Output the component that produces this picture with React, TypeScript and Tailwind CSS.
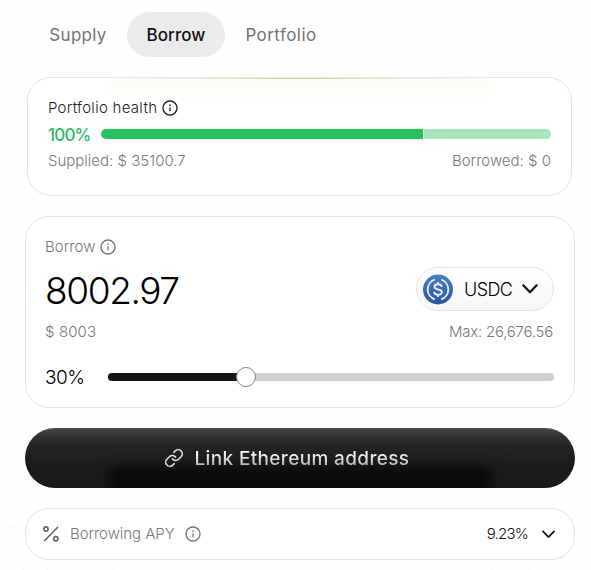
import { useState } from "react"
import { Link } from "lucide-react"

const TABS = ["Supply", "Borrow", "Portfolio"] as const
type Tab = (typeof TABS)[number]

const TAB_STYLE: Record<Tab, string> = {
  Supply: "w-[102px] pl-[4px] tracking-[0.3px]",
  Borrow: "w-[98px] tracking-[0.05px]",
  Portfolio: "w-[112px] tracking-[0.45px]",
}

function InfoIcon({ className }: { className?: string }) {
  return (
    <svg width="16" height="16" viewBox="0 0 16 16" fill="none" className={className}>
      <circle cx="8" cy="8" r="7" stroke="currentColor" strokeWidth="1.4" />
      <path d="M8 7.3v4" stroke="currentColor" strokeWidth="1.3" />
      <circle cx="8" cy="5.2" r="0.85" fill="currentColor" />
    </svg>
  )
}

function PercentIcon() {
  return (
    <svg width="16" height="16" viewBox="0 0 16 16" fill="none" stroke="#66676b">
      <circle cx="3" cy="3" r="2.1" strokeWidth="1.7" />
      <circle cx="12.8" cy="12.8" r="2.1" strokeWidth="1.7" />
      <path d="M14.5 1.5 1.8 14.5" strokeWidth="1.7" strokeLinecap="round" />
    </svg>
  )
}

function Chevron({ width, height }: { width: number; height: number }) {
  return (
    <svg width={width} height={height} viewBox="0 0 16 10" fill="none" stroke="#111" strokeWidth="2.2">
      <path d="M1.3 1.3 8 8.2l6.7-6.9" strokeLinecap="round" strokeLinejoin="round" />
    </svg>
  )
}

function UsdcIcon() {
  return (
    <svg width="30" height="31" viewBox="0 0 30 30" fill="none">
      <defs>
        <linearGradient id="usdc" x1="0" y1="0" x2="0" y2="1">
          <stop offset="0" stopColor="#4b7fc6" />
          <stop offset="1" stopColor="#2854aa" />
        </linearGradient>
      </defs>
      <circle cx="15" cy="15" r="15" fill="url(#usdc)" />
      <g stroke="#e9f0fa" strokeWidth="1.9">
        <path d="M11.8 5.2a10.3 10.3 0 0 0 0 19.6M18.2 5.2a10.3 10.3 0 0 1 0 19.6" />
        <path d="M18.8 12.3c-.3-1.7-1.7-2.5-3.8-2.5-2.2 0-3.6.9-3.6 2.5 0 3.8 7.5 1.5 7.5 5.2 0 1.7-1.5 2.7-3.9 2.7-2.3 0-3.8-1-4-2.8M15 7.6v2.2M15 20.2v2.3" />
      </g>
    </svg>
  )
}

function BackgroundLines() {
  return (
    <svg width="591" height="70" viewBox="0 0 591 70" fill="none" stroke="#f9f9f9" className="absolute bottom-0 left-0">
      <path d="M0 12c30 7 60 20 90 44s60 20 90 24M0 24c35 8 65 20 95 46M0 36c30 6 55 16 75 34M0 48c20 4 36 10 48 22M0 60c10 2 18 5 24 10" />
      <path d="M591 42c-35 5-65 14-100 28M591 53c-25 3-42 8-62 17" />
    </svg>
  )
}

export default function App() {
  const [tab, setTab] = useState<Tab>("Borrow")
  const [percent] = useState(30)

  return (
    <div className="relative h-[570px] w-[591px] overflow-hidden bg-[#fefefe] font-['Inter',sans-serif] text-black">
      <BackgroundLines />
      <main className="relative px-[25px] pt-3">
        <nav className="flex">
          {TABS.map(t => (
            <button
              key={t}
              onClick={() => setTab(t)}
              className={`h-[45px] rounded-full pt-[2px] text-[17px] ${TAB_STYLE[t]} ${tab === t ? "bg-[#ebebed] font-medium text-[#111]" : "text-[#737478]"}`}
            >
              {t}
            </button>
          ))}
        </nav>

        <section className="relative mt-5 ml-[2px] h-[119px] w-[545px] rounded-[24px] border border-[#e3e3e4] bg-white px-5 pt-5">
          <div className="absolute top-0 left-[82px] h-px w-[380px] bg-linear-to-r from-transparent via-[#a9bd6c] to-transparent" />
          <div className="absolute top-px left-[82px] h-5 w-[380px] bg-linear-to-b from-[#fafbf2] to-transparent blur-[3px]" />
          <div className="relative flex h-5 items-center gap-[5px] text-[15px] text-[#222]">
            <span className="font-light tracking-[0.28px]">Portfolio health</span>
            <InfoIcon />
          </div>
          <div className="mt-[6px] flex h-5 items-center">
            <span className="w-[53px] pt-[3px] text-[17px] font-medium tracking-[-0.8px] text-[#2abd60]">100%</span>
            <div className="flex h-[10px] w-[450px] gap-px overflow-hidden rounded-[5px]">
              <div className="w-[322px] bg-[#25c45d]" />
              <div className="flex-1 bg-[#a6e6bc]" />
            </div>
          </div>
          <div className="mt-[7px] flex h-5 w-[503px] items-center justify-between text-[15px] font-light text-[#77787c]">
            <span>Supplied: $ 35100.7</span>
            <span>Borrowed: $ 0</span>
          </div>
        </section>

        <section className="mt-5 h-[192px] w-[550px] rounded-[24px] border border-[#e3e3e4] bg-white pr-5 pl-[19px] pt-5">
          <div className="flex h-5 items-center gap-[5px] text-[15px] text-[#77787c]">
            <span className="font-light tracking-[0.05px]">Borrow</span>
            <InfoIcon />
          </div>
          <div className="mt-[10px] flex h-11 items-center justify-between">
            <span className="pt-[3px] text-[37px] leading-none font-light tracking-[-1.4px]">8002.97</span>
            <button className="flex h-11 w-[138px] items-center rounded-full border border-[#e3e3e4] bg-linear-to-b from-white to-[#f6f6f6] pl-[6px]">
              <UsdcIcon />
              <span className="ml-[11px] w-[58px] pt-px text-left text-[18px] font-light tracking-[-0.6px]">USDC</span>
              <Chevron width={16} height={10} />
            </button>
          </div>
          <div className="mt-[11px] flex h-5 items-center justify-between pr-px text-[15px] font-light text-[#77787c]">
            <span className="tracking-[0.1px]">$ 8003</span>
            <span className="tracking-[-0.25px]">Max: 26,676.56</span>
          </div>
          <div className="mt-[25px] flex h-5 items-center">
            <span className="w-[63px] pt-[2px] text-[19px] font-light tracking-[-0.5px]">{percent}%</span>
            <div className="relative h-2 w-[446px] rounded-full bg-[#d0d0d0]">
              <div className="h-2 rounded-l-full bg-[#171717]" style={{ width: `calc(${percent}% + 4px)` }} />
              <div
                className="absolute -top-[6px] size-5 rounded-full border border-[#858585] bg-white"
                style={{ left: `calc((100% - 20px) * ${percent / 100})` }}
              />
            </div>
          </div>
        </section>

        <button className="relative mt-5 flex h-[60px] w-[550px] items-center justify-center gap-[11px] overflow-hidden rounded-full bg-[linear-gradient(#4a4a4a_0%,#303030_15%,#232323_32%,#1b1b1b_65%,#181818_100%)] pr-[27px]">
          <span className="absolute top-[38px] left-[84px] h-7 w-[382px] rounded-lg bg-[#0b0b0b] blur-[5px]" />
          <Link size={20} strokeWidth={1.9} className="relative text-[#e0e0e0]" />
          <span className="relative top-px bg-linear-to-b from-white from-25% to-[#aaa] to-85% bg-clip-text text-[19px] leading-6 font-medium tracking-[0.35px] text-transparent">
            Link Ethereum address
          </span>
        </button>

        <section className="mt-5 flex h-[52px] w-[550px] items-center rounded-[24px] border border-[#e3e3e4] bg-white pr-[19px] pl-[17px] text-[15px] font-light">
          <PercentIcon />
          <span className="ml-[11px] tracking-[-0.05px] text-[#77787c]">Borrowing APY</span>
          <InfoIcon className="ml-[10px] text-[#77787c]" />
          <span className="ml-auto mr-[14px] tracking-[-0.8px] text-[#111]">9.23%</span>
          <Chevron width={13} height={9} />
        </section>
      </main>
    </div>
  )
}
